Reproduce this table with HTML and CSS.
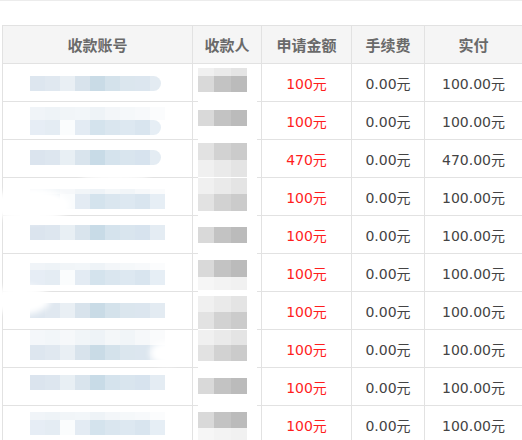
FILE: index.html
```html
<!DOCTYPE html>
<html lang="zh">
<head>
<meta charset="utf-8">
<title>提现记录</title>
<link rel="stylesheet" href="styles.css">
</head>
<body>
<div class="topline"></div>
<div class="wrap">
<table class="grid">
  <colgroup>
    <col class="w-acct"><col class="w-name"><col class="w-amt"><col class="w-fee"><col class="w-paid">
  </colgroup>
  <thead>
    <tr><th>收款账号</th><th>收款人</th><th>申请金额</th><th>手续费</th><th>实付</th></tr>
  </thead>
  <tbody>
    <tr class="r1">
      <td class="c-acct"><div class="bar p1 round"></div></td>
      <td class="c-name"><div class="px lt h8"></div><div class="px dk h16"></div></td>
      <td class="amt">100元</td><td>0.00元</td><td>100.00元</td>
    </tr>
    <tr class="r2">
      <td class="c-acct"><div class="band b1 h13"></div><div class="bar p2 round"></div></td>
      <td class="c-name"><div class="px dk h16"></div></td>
      <td class="amt">100元</td><td>0.00元</td><td>100.00元</td>
    </tr>
    <tr class="r3">
      <td class="c-acct"><div class="bar p3 round"></div></td>
      <td class="c-name"><div class="px md h17"></div><div class="px lt h17"></div></td>
      <td class="amt">470元</td><td>0.00元</td><td>470.00元</td>
    </tr>
    <tr class="r4">
      <td class="c-acct"><div class="band b2 h5"></div><div class="bar p2"></div></td>
      <td class="c-name"><div class="px lt h16"></div><div class="px md h17"></div></td>
      <td class="amt">100元</td><td>0.00元</td><td>100.00元</td>
    </tr>
    <tr class="r5">
      <td class="c-acct"><div class="bar p3"></div></td>
      <td class="c-name"><div class="px dk h16"></div></td>
      <td class="amt">100元</td><td>0.00元</td><td>100.00元</td>
    </tr>
    <tr class="r6">
      <td class="c-acct"><div class="band b1 h7"></div><div class="bar p2"></div></td>
      <td class="c-name"><div class="px dk h17"></div><div class="px vl h13"></div></td>
      <td class="amt">100元</td><td>0.00元</td><td>100.00元</td>
    </tr>
    <tr class="r7">
      <td class="c-acct"><div class="bar p1"></div></td>
      <td class="c-name"><div class="px lt h16"></div><div class="px md h17"></div></td>
      <td class="amt">100元</td><td>0.00元</td><td>100.00元</td>
    </tr>
    <tr class="r8">
      <td class="c-acct"><div class="band b2 h15"></div><div class="bar p1"></div></td>
      <td class="c-name"><div class="px lt h15"></div><div class="px md h16"></div></td>
      <td class="amt">100元</td><td>0.00元</td><td>100.00元</td>
    </tr>
    <tr class="r9">
      <td class="c-acct"><div class="bar p3"></div></td>
      <td class="c-name"><div class="px dk h16"></div></td>
      <td class="amt">100元</td><td>0.00元</td><td>100.00元</td>
    </tr>
    <tr class="r10">
      <td class="c-acct"><div class="band b1 h8"></div><div class="bar p2"></div></td>
      <td class="c-name"><div class="px dk h16"></div><div class="px vl h13"></div></td>
      <td class="amt">100元</td><td>0.00元</td><td>100.00元</td>
    </tr>
  </tbody>
</table>
<div class="smudge s1"></div>
<div class="smudge s2"></div>
<div class="smudge s3"></div>
<div class="smudge s4"></div>
</div>
</body>
</html>
```

FILE: styles.css
```css
html, body {
  margin: 0;
  padding: 0;
  background: #ffffff;
  overflow: hidden;
}
body {
  width: 522px;
  height: 440px;
  font-family: "DejaVu Sans", "Noto Sans CJK SC", sans-serif;
}
.topline {
  height: 1px;
  background: #ececec;
}
.wrap {
  position: relative;
  margin-top: 24px;
  padding-left: 2px;
}
.grid {
  border-collapse: separate;
  border-spacing: 0;
  table-layout: fixed;
  width: 521px;
  border-top: 1px solid #e2e2e2;
  border-left: 1px solid #e2e2e2;
}
.w-acct { width: 190px; }
.w-name { width: 69px; }
.w-amt { width: 90px; }
.w-fee { width: 73px; }
.w-paid { width: 98px; }

.grid th, .grid td {
  box-sizing: border-box;
  height: 38px;
  padding: 0;
  border-right: 1px solid #e2e2e2;
  border-bottom: 1px solid #e2e2e2;
  text-align: center;
  vertical-align: middle;
  white-space: nowrap;
}
.grid th {
  background: #f5f5f5;
  color: #6a6a6a;
  font-family: "Noto Sans CJK SC", sans-serif;
  font-weight: bold;
  font-size: 15px;
  letter-spacing: 0;
}
.grid td {
  color: #444444;
  font-size: 14px;
}
.grid td.amt {
  color: #ff1e1e;
}

/* blurred account number */
.grid td.c-acct {
  vertical-align: top;
  padding-left: 27px;
}
.bar, .band {
  width: 135px;
}
.bar { height: 15px; }
.bar.round { width: 131px; border-radius: 0 8px 8px 0; }
.p1 {
  background: linear-gradient(to right,
    #dde6ef 0 15px, #e0e8f0 15px 30px, #e9eff4 30px 45px,
    #d8e3ec 45px 60px, #c9dbe6 60px 75px, #d4e2eb 75px 90px,
    #dbe6ee 90px 105px, #dce6ef 105px 120px, #e3ebf2 120px 135px);
}
.p2 {
  background: linear-gradient(to right,
    #e6edf5 0 15px, #e4ecf3 15px 30px, #fafcfd 30px 45px,
    #e3ebf3 45px 60px, #d4e3ed 60px 75px, #dae6ef 75px 90px,
    #dde8f1 90px 105px, #d9e5ef 105px 120px, #e6eef5 120px 135px);
}
.p3 {
  background: linear-gradient(to right,
    #dbe4ee 0 15px, #dde6ef 15px 30px, #e8eff4 30px 45px,
    #d9e4ed 45px 60px, #c8dbe7 60px 75px, #d5e3ed 75px 90px,
    #d9e5ee 90px 105px, #d7e3ee 105px 120px, #e4ecf3 120px 135px);
}
.b1 {
  background: linear-gradient(to right,
    #f0f4f8 0 15px, #eef3f7 15px 30px, #f1f5f8 30px 45px,
    #f2f6f9 45px 60px, #eef3f7 60px 75px, #f3f6f9 75px 90px,
    #f5f8fa 90px 105px, #f7f9fb 105px 120px, #fbfcfd 120px 135px);
}
.b2 {
  background: linear-gradient(to right,
    #f4f7fa 0 15px, #f2f6f9 15px 30px, #f6f8fa 30px 45px,
    #f1f5f8 45px 60px, #eef3f7 60px 75px, #f4f7f9 75px 90px,
    #f1f5f8 90px 105px, #f6f8fa 105px 120px, #fafbfc 120px 135px);
}

/* blurred payee name */
.grid td.c-name {
  vertical-align: top;
  padding-left: 5px;
  border-bottom-color: transparent;
  background: linear-gradient(to right, #e2e2e2 0 5px, transparent 5px 64px, #e2e2e2 64px) left bottom / 100% 1px no-repeat;
  background-origin: border-box;
}
.px { width: 49px; }
.dk {
  background: linear-gradient(to right, #d9d9d9 0 16px, #c3c3c3 16px 33px, #bbbbbb 33px 49px);
}
.md {
  background: linear-gradient(to right, #e2e2e2 0 16px, #d2d2d2 16px 33px, #cbcbcb 33px 49px);
}
.lt {
  background: linear-gradient(to right, #f0f0f0 0 16px, #eaeaea 16px 33px, #e4e4e4 33px 49px);
}
.vl {
  background: linear-gradient(to right, #f6f6f6 0 16px, #f3f3f3 16px 33px, #f1f1f1 33px 49px);
}

.h5 { height: 5px; }
.h7 { height: 7px; }
.h8 { height: 8px; }
.h13 { height: 13px; }
.h15 { height: 15px; }
.h16 { height: 16px; }
.h17 { height: 17px; }

/* vertical placement of the blurred blocks, per row */
.r1 .c-acct { padding-top: 12px; }
.r1 .c-name { padding-top: 4px; }
.r2 .c-acct { padding-top: 5px; }
.r2 .c-name { padding-top: 8px; }
.r3 .c-acct { padding-top: 10px; }
.r3 .c-name { padding-top: 3px; }
.r4 .c-acct { padding-top: 11px; }
.r4 .c-name { padding-top: 0; }
.r5 .c-acct { padding-top: 9px; }
.r5 .c-name { padding-top: 11px; }
.r6 .c-acct { padding-top: 9px; }
.r6 .c-name { padding-top: 6px; }
.r7 .c-acct { padding-top: 11px; }
.r7 .c-name { padding-top: 4px; }
.r8 .c-acct { padding-top: 0; }
.r8 .c-name { padding-top: 0; }
.r9 .c-acct { padding-top: 7px; }
.r9 .c-name { padding-top: 10px; }
.r10 .c-acct { padding-top: 6px; }
.r10 .c-name { padding-top: 6px; }

/* white smears left by the blur over the grid lines */
.smudge {
  position: absolute;
  background: #ffffff;
  border-radius: 50%;
  filter: blur(3px);
}
.s1 { left: -10px; top: 163px; width: 80px; height: 34px; }
.s2 { left: 80px; top: 148px; width: 70px; height: 8px; }
.s3 { left: -10px; top: 260px; width: 60px; height: 30px; }
.s4 { left: 150px; top: 316px; width: 34px; height: 24px; }
```
